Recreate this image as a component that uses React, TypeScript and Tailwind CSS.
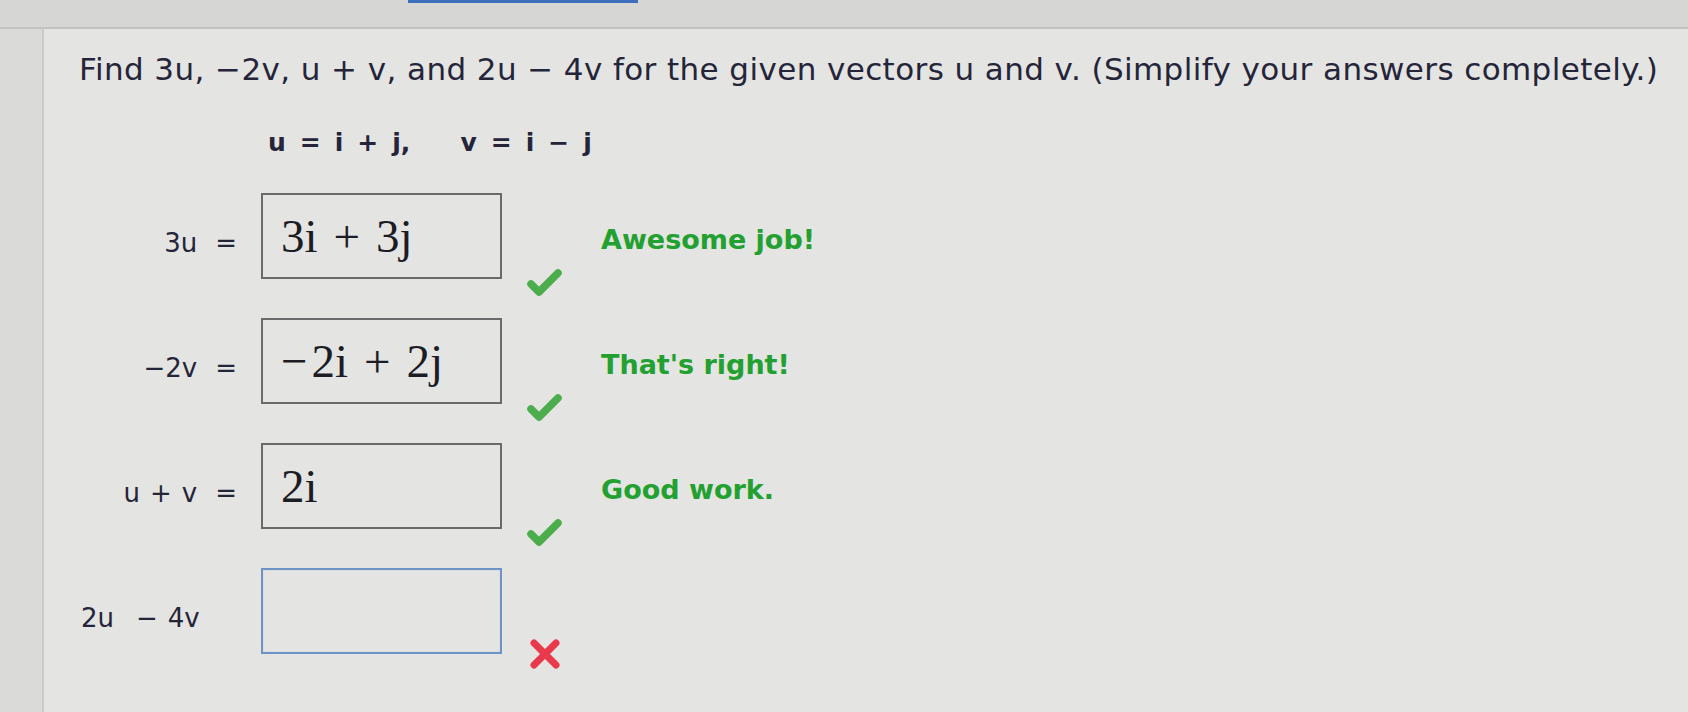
import type { ReactNode } from "react";

type Row = {
  label: ReactNode;
  withEquals: boolean;
  answer: ReactNode | null;
  status: "ok" | "wrong";
  feedback?: string;
};

function Check() {
  return (
    <svg width="37" height="30" viewBox="0 0 37 30" className="block">
      <path
        d="M5 17 L13 25 L32 6"
        fill="none"
        stroke="#4cad4c"
        strokeWidth="7.5"
        strokeLinecap="round"
        strokeLinejoin="round"
      />
    </svg>
  );
}

function Cross() {
  return (
    <svg width="37" height="32" viewBox="0 0 37 32" className="block">
      <path
        d="M8 5 L30 27 M30 5 L8 27"
        fill="none"
        stroke="#e83a4c"
        strokeWidth="7"
        strokeLinecap="round"
      />
    </svg>
  );
}

const op = "mx-[10px]";

const rows: Row[] = [
  {
    label: <span>3u</span>,
    withEquals: true,
    answer: (
      <>
        3i<span className="mx-[16px]">+</span>3j
      </>
    ),
    status: "ok",
    feedback: "Awesome job!",
  },
  {
    label: <span>−2v</span>,
    withEquals: true,
    answer: (
      <>
        <span className="mr-[4px]">−</span>2i<span className="mx-[16px]">+</span>2j
      </>
    ),
    status: "ok",
    feedback: "That's right!",
  },
  {
    label: (
      <span>
        u<span className={op}>+</span>v
      </span>
    ),
    withEquals: true,
    answer: <>2i</>,
    status: "ok",
    feedback: "Good work.",
  },
  {
    label: (
      <span>
        2u<span className="ml-[22px] mr-[10px]">−</span>4v
      </span>
    ),
    withEquals: false,
    answer: null,
    status: "wrong",
  },
];

export default function App() {
  return (
    <div className="w-full h-[712px] flex flex-col overflow-hidden bg-[#e4e4e2] text-[#25253a] font-['DejaVu_Sans',sans-serif]">
      <div className="h-[27px] shrink-0 bg-[#d6d6d4] flex">
        <div className="ml-[408px] w-[230px] h-[3px] bg-[#3d6dbd]" />
      </div>
      <div className="h-[2px] shrink-0 bg-[#c2c2c0]" />

      <div className="flex-1 flex">
        <div className="w-[44px] shrink-0 bg-[#dadad8] border-r-2 border-[#c9c9c7]" />

        <div className="flex-1 pl-[35px]">
          <p className="mt-[22px] text-[31px] leading-[36px] tracking-[0.4px] whitespace-nowrap">
            Find 3u, −2v, u + v, and 2u − 4v for the given vectors u and v. (Simplify your answers completely.)
          </p>

          <p className="mt-[40px] pl-[189px] text-[25px] leading-[32px] font-bold whitespace-nowrap">
            u<span className="mx-[14px]">=</span>i<span className="mx-[14px]">+</span>j,
            <span className="ml-[50px]">v</span>
            <span className="mx-[14px]">=</span>i<span className="mx-[14px]">−</span>j
          </p>

          <div className="mt-[34px] flex flex-col gap-[39px]">
            {rows.map((row, i) => (
              <div key={i} className="h-[86px] flex items-baseline">
                <div
                  className={
                    "w-[158px] shrink-0 flex items-baseline text-[26px] leading-[30px] whitespace-nowrap " +
                    (row.withEquals ? "justify-end" : "justify-start pl-[2px]")
                  }
                >
                  {row.label}
                  {row.withEquals && <span className="ml-[18px]">=</span>}
                </div>

                <div
                  className={
                    "ml-[24px] w-[241px] h-[86px] shrink-0 flex items-center pl-[18px] border-2 font-['Liberation_Serif',serif] text-[47px] leading-[54px] text-[#1c1c24] " +
                    (row.status === "wrong"
                      ? "border-[#6f93c4] shadow-[inset_0_0_2px_#b9cde6]"
                      : "border-[#6a6a6c]")
                  }
                >
                  <span>{row.answer ?? "\u00a0"}</span>
                </div>

                <div
                  className={
                    "ml-[24px] w-[37px] shrink-0 self-start " +
                    (row.status === "wrong" ? "mt-[70px]" : "mt-[74px]")
                  }
                >
                  {row.status === "ok" ? <Check /> : <Cross />}
                </div>

                {row.feedback && (
                  <div className="ml-[38px] text-[27px] leading-[30px] font-bold text-[#22a030] whitespace-nowrap -translate-y-[3px]">
                    {row.feedback}
                  </div>
                )}
              </div>
            ))}
          </div>
        </div>
      </div>
    </div>
  );
}
